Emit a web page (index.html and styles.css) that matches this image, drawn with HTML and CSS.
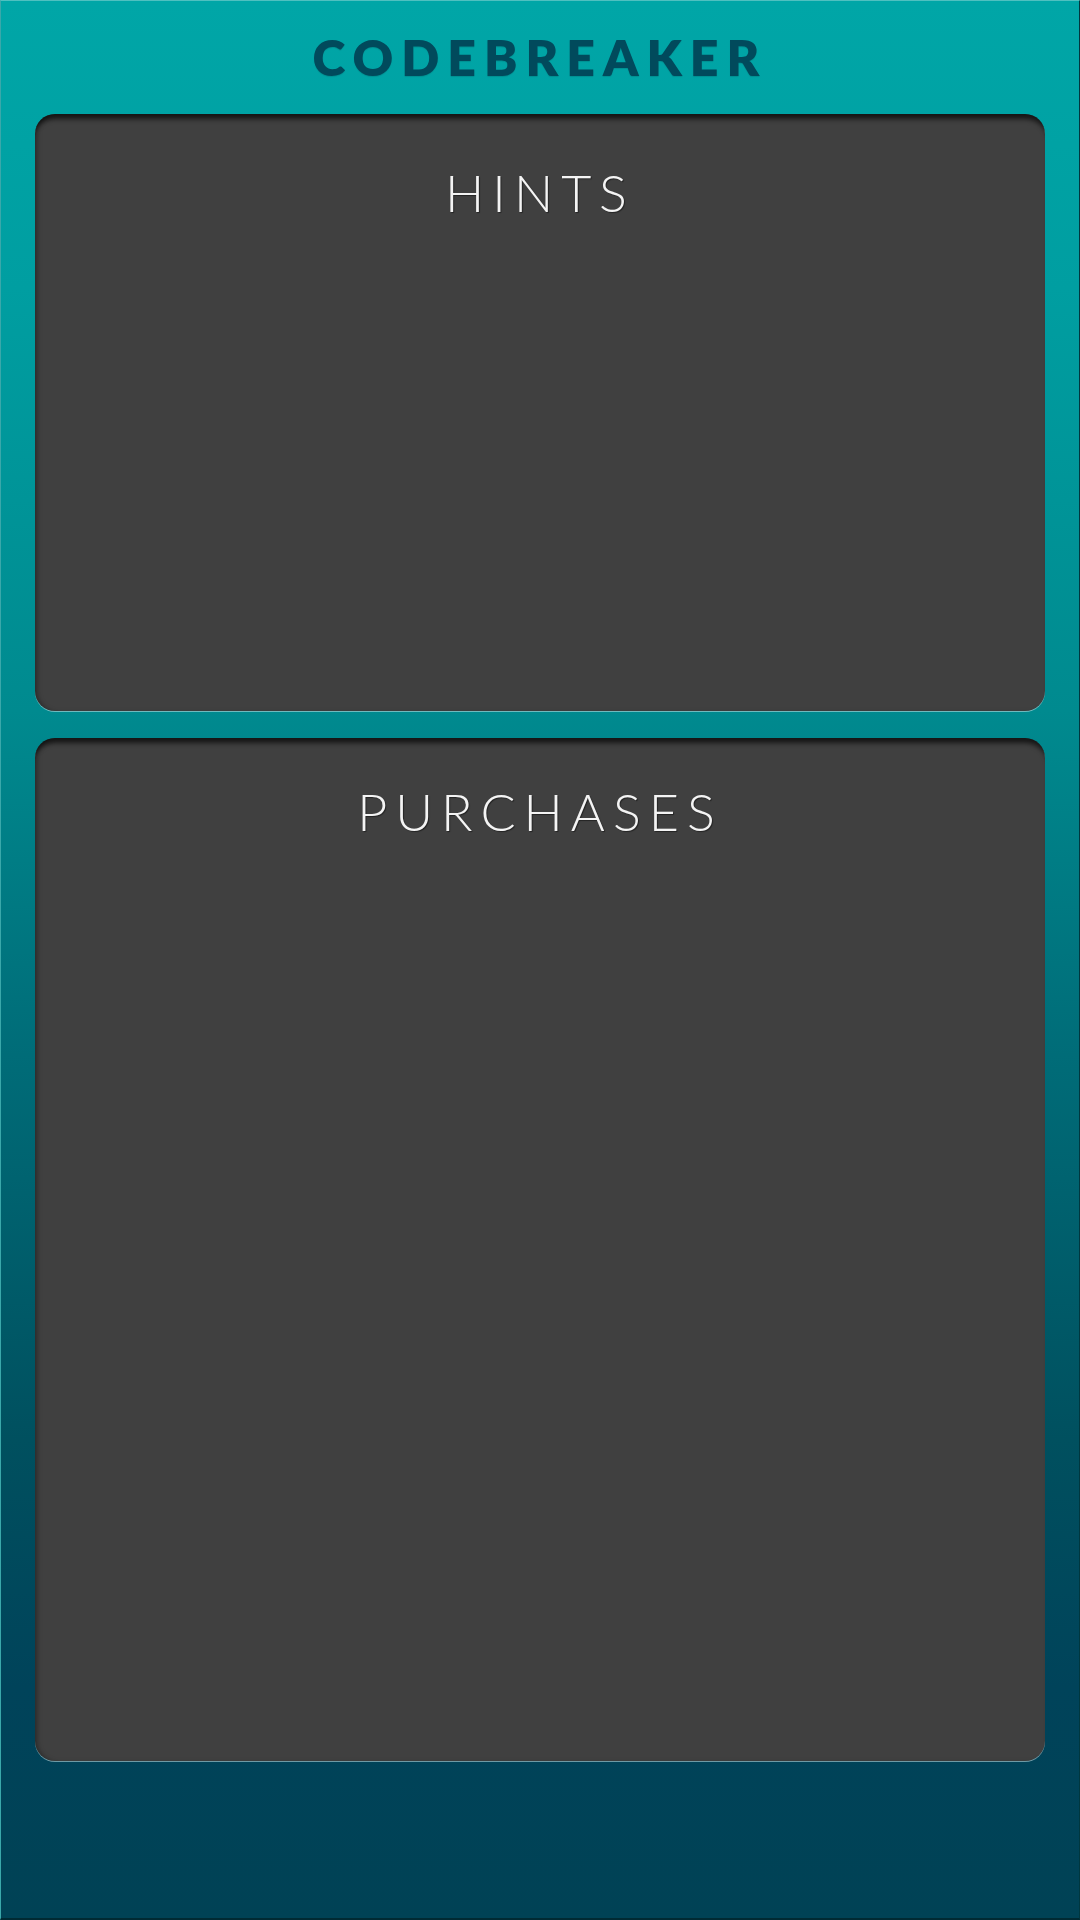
FILE: index.html
```html
<!DOCTYPE html>
<html>
<head>
<meta charset="utf-8">
<link rel="stylesheet" href="styles.css">
</head>
<body>
<div class="screen">
  <header class="title">CODEBREAKER</header>
  <section class="panel hints">
    <h2 class="panel-title">HINTS</h2>
  </section>
  <section class="panel purchases">
    <h2 class="panel-title">PURCHASES</h2>
  </section>
</div>
</body>
</html>
```
FILE: styles.css
```css
html, body {
  margin: 0;
  padding: 0;
}
body {
  width: 1080px;
  height: 1920px;
  overflow: hidden;
}
.screen {
  box-sizing: border-box;
  width: 1080px;
  height: 1920px;
  display: flex;
  flex-direction: column;
  padding: 0 34px 160px 34px;
  gap: 27px;
  background: linear-gradient(to bottom,
    #00a6a7 0%,
    #009ea1 15%,
    #008a8f 37%,
    #006c78 55%,
    #00505f 75%,
    #00435a 88%,
    #004255 100%);
  border-top: 1px solid #4fc0c0;
  border-left: 1px solid #3aa8aa;
  border-right: 1px solid #00373f;
  border-bottom: 2px solid #002a33;
}
.title {
  box-sizing: border-box;
  height: 86px;
  flex: none;
  display: flex;
  align-items: flex-start;
  justify-content: center;
  padding-top: 31px;
  font-family: "Lato", "Liberation Sans", sans-serif;
  font-weight: 800;
  font-size: 50px;
  line-height: 1;
  letter-spacing: 8px;
  color: #014a5c;
  text-shadow: 0 1px 1px rgba(0,0,0,0.12);
}
.panel {
  background: #404040;
  border-radius: 20px;
  box-shadow:
    inset 0 9px 5px -4px rgba(0,0,0,0.65),
    inset 4px 0 5px -2px rgba(0,0,0,0.35),
    0 1px 0 rgba(200,225,230,0.55);
  display: flex;
  flex-direction: column;
  align-items: center;
  flex: none;
}
.hints {
  height: 597px;
}
.purchases {
  height: 1023px;
}
.panel-title {
  margin: 0;
  font-family: "Lato", "Liberation Sans", sans-serif;
  font-weight: 300;
  font-size: 52px;
  letter-spacing: 8px;
  color: #f4f4f4;
  text-shadow: 1px 1px 1px rgba(0,0,0,0.45);
  line-height: 1;
}
.hints .panel-title {
  margin-top: 52px;
}
.purchases .panel-title {
  margin-top: 47px;
}
```
